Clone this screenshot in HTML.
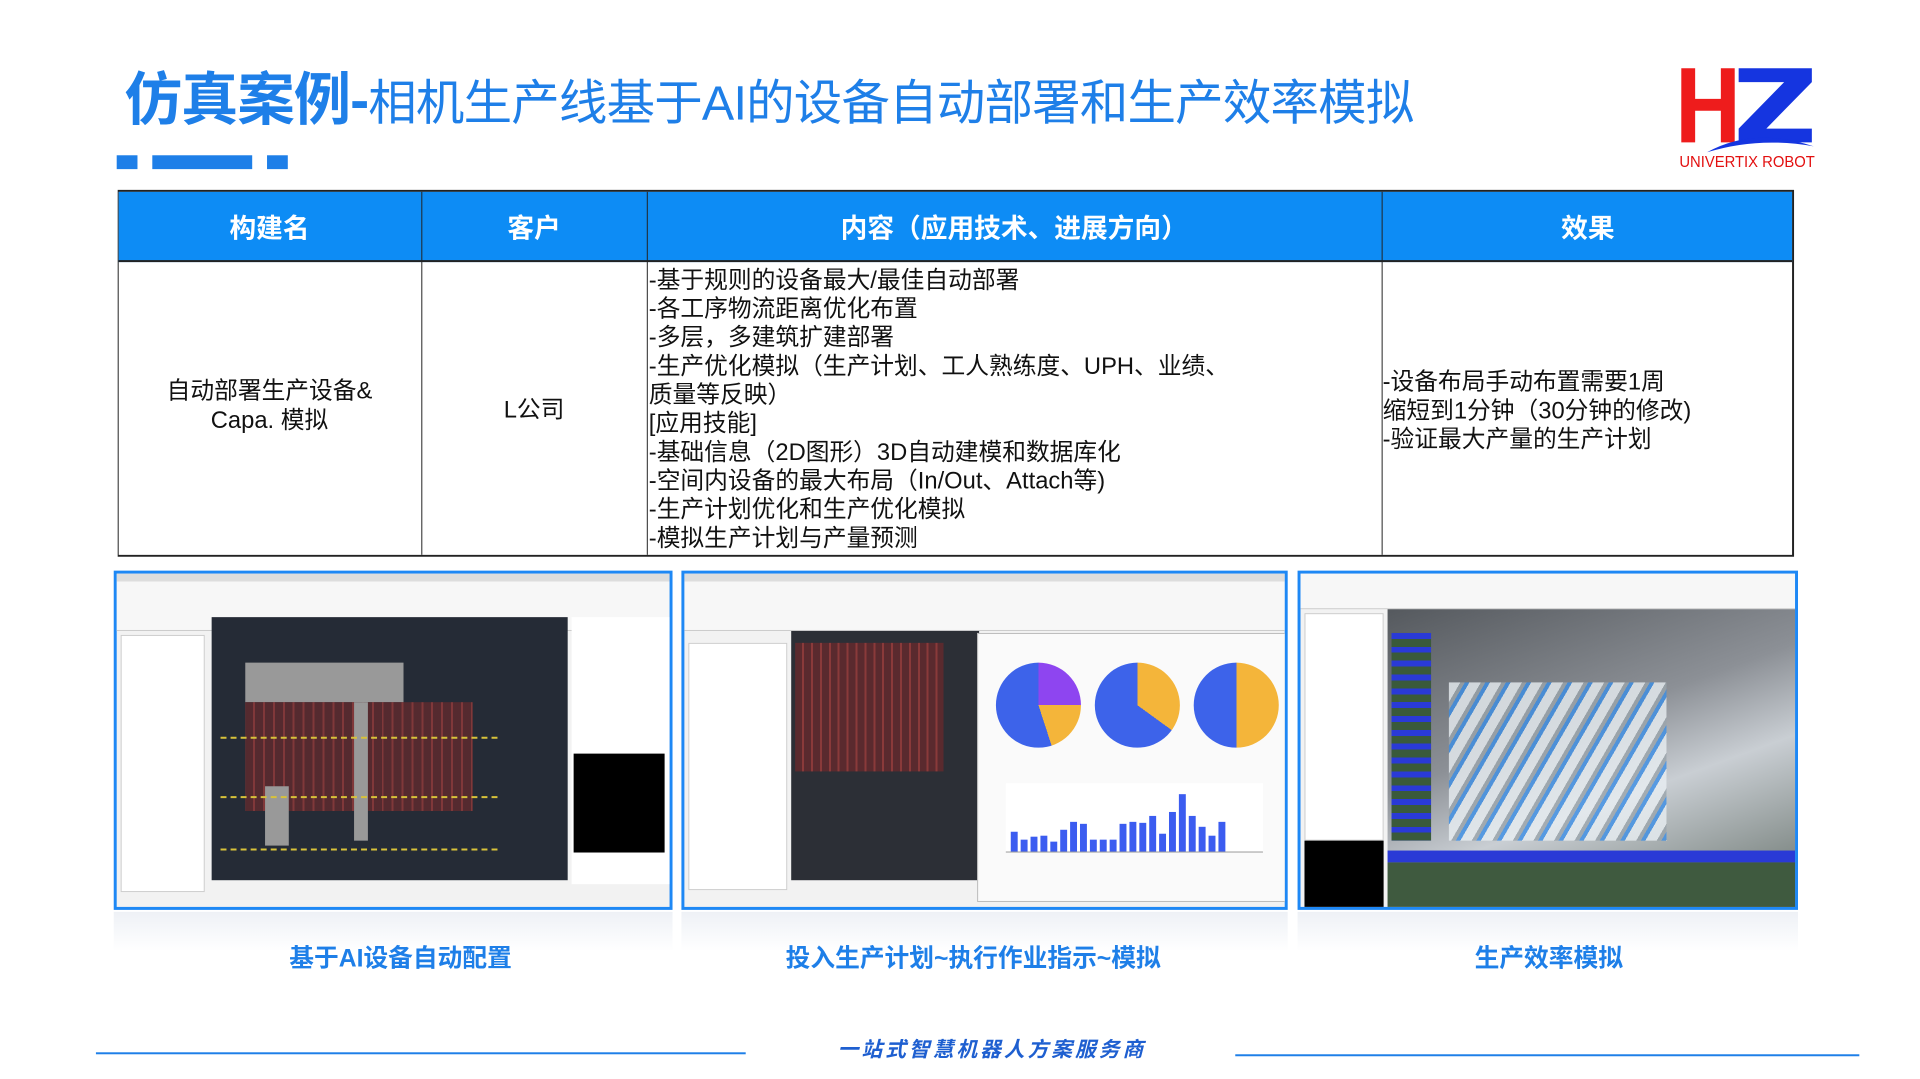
<!DOCTYPE html>
<html><head><meta charset="utf-8"><style>
*{margin:0;padding:0;box-sizing:border-box}
body{width:1920px;height:1079px;background:#fff;position:relative;overflow:hidden;font-family:"Liberation Sans","Noto Sans CJK SC",sans-serif}
#w{position:absolute;left:0;top:0;width:1942px;height:1091px;transform:scale(0.989);transform-origin:0 0}
.a{position:absolute}
.t{position:absolute;white-space:nowrap}
.cell{position:absolute;border-left:1px solid #222;top:0;bottom:0}
.line{position:absolute;left:656px;font-size:24px;color:#111;white-space:nowrap}
.panel{position:absolute;border:3px solid #1e88f5;background:#f2f2f2;overflow:hidden}
.bar{position:absolute;bottom:0;background:#3b5cf0;width:7px}
</style></head><body><div id="w">
<div class="t" style="left:126px;top:54px;font-size:58px;color:#1e7fe8;font-weight:bold;letter-spacing:-1px">仿真案例-<span style="font-weight:normal;font-size:49px;letter-spacing:-0.8px">相机生产线基于AI的设备自动部署和生产效率模拟</span></div>
<div class="a" style="left:118px;top:157px;width:21px;height:14px;background:#1e7fe8"></div>
<div class="a" style="left:154px;top:157px;width:101px;height:14px;background:#1e7fe8"></div>
<div class="a" style="left:270px;top:157px;width:21px;height:14px;background:#1e7fe8"></div>
<svg class="a" style="left:1698px;top:66px" width="138" height="106" viewBox="0 0 138 106">
<path d="M2 3h14v31h26V3h14v75H42V46H16v32H2z" fill="#ee1c1c"/>
<path d="M60 3h74v14l-46 47h46v14H60V64l46-47H60z" fill="#1535e0"/>
<path d="M28 88 Q75 62 136 82 Q80 72 28 88z" fill="#1535e0"/>
<text x="0" y="103" font-family="Liberation Sans" font-size="16" fill="#e31010" textLength="137" lengthAdjust="spacingAndGlyphs">UNIVERTIX ROBOT</text>
</svg>
<div class="a" style="left:119px;top:192px;width:1695px;height:371px;border:2px solid #222;border-left:1px solid #222">
 <div class="a" style="left:0;top:0;right:0;height:71px;background:#0d8cf5;border-bottom:2px solid #222"></div>
 <div class="cell" style="left:306px"></div>
 <div class="cell" style="left:534px"></div>
 <div class="cell" style="left:1277px"></div>
</div>
<div class="t" style="left:119px;width:307px;top:209px;text-align:center;color:#fff;font-size:27px;font-weight:bold">构建名</div>
<div class="t" style="left:426px;width:228px;top:209px;text-align:center;color:#fff;font-size:27px;font-weight:bold">客户</div>
<div class="t" style="left:654px;width:743px;top:209px;text-align:center;color:#fff;font-size:27px;font-weight:bold">内容（应用技术、进展方向）</div>
<div class="t" style="left:1397px;width:417px;top:209px;text-align:center;color:#fff;font-size:27px;font-weight:bold">效果</div>
<div class="t" style="left:119px;width:307px;top:381px;text-align:center;font-size:24px;line-height:30px;color:#111">自动部署生产设备&amp;<br>Capa. 模拟</div>
<div class="t" style="left:426px;width:228px;top:394px;text-align:center;font-size:24px;color:#111">L公司</div>
<div class="line" style="top:263px"> -基于规则的设备最大/最佳自动部署</div>
<div class="line" style="top:292px">-各工序物流距离优化布置</div>
<div class="line" style="top:321px">-多层，多建筑扩建部署</div>
<div class="line" style="top:350px">-生产优化模拟（生产计划、工人熟练度、UPH、业绩、</div>
<div class="line" style="top:379px">质量等反映）</div>
<div class="line" style="top:408px">[应用技能]</div>
<div class="line" style="top:437px">-基础信息（2D图形）3D自动建模和数据库化</div>
<div class="line" style="top:466px">-空间内设备的最大布局（In/Out、Attach等)</div>
<div class="line" style="top:495px">-生产计划优化和生产优化模拟</div>
<div class="line" style="top:524px">-模拟生产计划与产量预测</div>
<div class="line" style="left:1398px;top:366px">-设备布局手动布置需要1周</div>
<div class="line" style="left:1398px;top:395px">缩短到1分钟（30分钟的修改)</div>
<div class="line" style="left:1398px;top:424px">-验证最大产量的生产计划</div>
<div class="panel" style="left:115px;top:577px;width:565px;height:343px">
 <div class="a" style="left:0;top:0;right:0;height:8px;background:#ddd"></div>
 <div class="a" style="left:0;top:8px;right:0;height:50px;background:#f7f7f7;border-bottom:1px solid #ccc"></div>
 <div class="a" style="left:4px;top:62px;width:85px;height:260px;background:#fff;border:1px solid #ccc"></div>
 <div class="a" style="left:96px;top:44px;width:360px;height:266px;background:#252b36"></div>
 <div class="a" style="left:130px;top:90px;width:160px;height:40px;background:#999"></div>
 <div class="a" style="left:130px;top:130px;width:230px;height:110px;background:repeating-linear-gradient(90deg,#5a2a2e 0 8px,#8a3a3a 8px 10px);opacity:.9"></div>
 <div class="a" style="left:240px;top:130px;width:14px;height:140px;background:#999"></div>
 <div class="a" style="left:150px;top:215px;width:24px;height:60px;background:#999"></div>
 <div class="a" style="left:105px;top:165px;width:280px;height:1px;border-top:2px dashed #d8c23a"></div>
 <div class="a" style="left:105px;top:225px;width:280px;height:1px;border-top:2px dashed #d8c23a"></div>
 <div class="a" style="left:105px;top:278px;width:280px;height:1px;border-top:2px dashed #d8c23a"></div>
 <div class="a" style="left:460px;top:44px;width:100px;height:270px;background:#fff"></div>
 <div class="a" style="left:462px;top:182px;width:92px;height:100px;background:#000"></div>
</div>
<div class="panel" style="left:689px;top:577px;width:613px;height:343px">
 <div class="a" style="left:0;top:0;right:0;height:8px;background:#ddd"></div>
 <div class="a" style="left:0;top:8px;right:0;height:50px;background:#f7f7f7;border-bottom:1px solid #ccc"></div>
 <div class="a" style="left:4px;top:70px;width:100px;height:250px;background:#fff;border:1px solid #ccc"></div>
 <div class="a" style="left:108px;top:58px;width:190px;height:252px;background:#2c2f36"></div>
 <div class="a" style="left:112px;top:70px;width:150px;height:130px;background:repeating-linear-gradient(90deg,#5a2a2e 0 7px,#8a3a3a 7px 9px)"></div>
 <div class="a" style="left:296px;top:60px;width:312px;height:272px;background:#fafafa;border:1px solid #bbb"></div>
 <div class="a" style="left:315px;top:90px;width:86px;height:86px;border-radius:50%;background:conic-gradient(#8e45f0 0 25%,#f4b53a 25% 45%,#3d63ea 45%)"></div>
 <div class="a" style="left:415px;top:90px;width:86px;height:86px;border-radius:50%;background:conic-gradient(#f4b53a 0 35%,#3d63ea 35%)"></div>
 <div class="a" style="left:515px;top:90px;width:86px;height:86px;border-radius:50%;background:conic-gradient(#f4b53a 0 50%,#3d63ea 50%)"></div>
 <div class="a" style="left:325px;top:212px;width:260px;height:70px;background:#fff;border-bottom:1px solid #999">
  <div class="bar" style="left:5px;height:20px"></div><div class="bar" style="left:15px;height:12px"></div><div class="bar" style="left:25px;height:15px"></div><div class="bar" style="left:35px;height:16px"></div><div class="bar" style="left:45px;height:10px"></div><div class="bar" style="left:55px;height:22px"></div><div class="bar" style="left:65px;height:30px"></div><div class="bar" style="left:75px;height:28px"></div><div class="bar" style="left:85px;height:12px"></div><div class="bar" style="left:95px;height:12px"></div><div class="bar" style="left:105px;height:12px"></div><div class="bar" style="left:115px;height:28px"></div><div class="bar" style="left:125px;height:30px"></div><div class="bar" style="left:135px;height:29px"></div><div class="bar" style="left:145px;height:36px"></div><div class="bar" style="left:155px;height:18px"></div><div class="bar" style="left:165px;height:40px"></div><div class="bar" style="left:175px;height:58px"></div><div class="bar" style="left:185px;height:36px"></div><div class="bar" style="left:195px;height:25px"></div><div class="bar" style="left:205px;height:16px"></div><div class="bar" style="left:215px;height:30px"></div>
 </div>
</div>
<div class="panel" style="left:1312px;top:577px;width:506px;height:343px">
 <div class="a" style="left:0;top:0;right:0;height:36px;background:#f7f7f7;border-bottom:1px solid #ccc"></div>
 <div class="a" style="left:4px;top:40px;width:80px;height:230px;background:#fff;border:1px solid #ccc"></div>
 <div class="a" style="left:4px;top:270px;width:80px;height:70px;background:#000"></div>
 <div class="a" style="left:88px;top:36px;width:418px;height:310px;background:linear-gradient(160deg,#55595e 0%,#8c9096 40%,#c9ced3 60%,#5f6a63 100%)"></div>
 <div class="a" style="left:150px;top:110px;width:220px;height:160px;background:repeating-linear-gradient(120deg,#e8eef2 0 10px,#9aa4ab 10px 14px,#3b8ee6 14px 18px);opacity:.8"></div>
 <div class="a" style="left:88px;top:280px;width:418px;height:12px;background:#2a3ad6"></div>
 <div class="a" style="left:88px;top:292px;width:418px;height:48px;background:#3f5a3f"></div>
 <div class="a" style="left:92px;top:60px;width:40px;height:210px;background:repeating-linear-gradient(180deg,#2a3ad6 0 6px,#3a5a3a 6px 14px)"></div>
</div>
<div class="a" style="left:115px;top:922px;width:565px;height:40px;background:linear-gradient(#eef1f6,#fff)"></div>
<div class="a" style="left:689px;top:922px;width:613px;height:40px;background:linear-gradient(#eef1f6,#fff)"></div>
<div class="a" style="left:1312px;top:922px;width:506px;height:40px;background:linear-gradient(#eef1f6,#fff)"></div>
<div class="t" style="left:205px;width:400px;top:949px;text-align:center;font-size:25px;font-weight:bold;color:#1e7fe8">基于AI设备自动配置</div>
<div class="t" style="left:734px;width:500px;top:949px;text-align:center;font-size:25px;font-weight:bold;color:#1e7fe8">投入生产计划~执行作业指示~模拟</div>
<div class="t" style="left:1366px;width:400px;top:949px;text-align:center;font-size:25px;font-weight:bold;color:#1e7fe8">生产效率模拟</div>
<div class="a" style="left:97px;top:1064px;width:657px;height:2px;background:#1e7fe8"></div>
<div class="a" style="left:1249px;top:1066px;width:631px;height:2px;background:#1e7fe8"></div>
<div class="t" style="left:803px;width:400px;top:1045px;text-align:center;font-size:21px;font-weight:bold;font-style:italic;color:#1e5fd0;letter-spacing:3px">一站式智慧机器人方案服务商</div>
</div></body></html>
